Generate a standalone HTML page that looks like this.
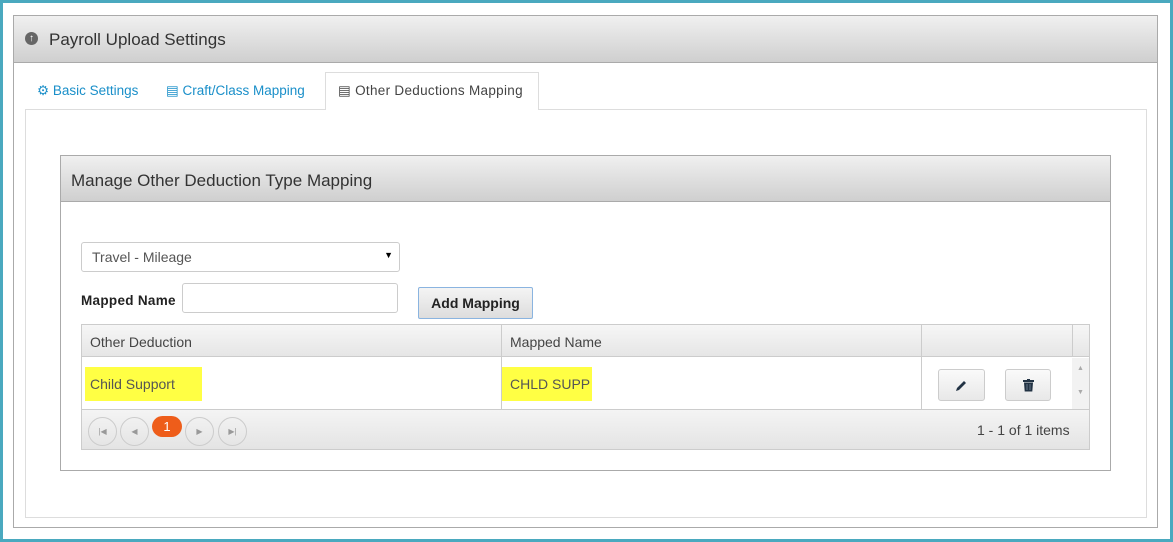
<!DOCTYPE html>
<html><head><style>
*{box-sizing:border-box;margin:0;padding:0}
body{width:1173px;height:542px;background:#fff;border:3px solid #4aa9bf;position:relative;font-family:"Liberation Sans",sans-serif;overflow:hidden}
.a{position:absolute}
</style></head><body>
<div class="a" style="left:10px;top:12px;width:1145px;height:513px;border:1px solid #aaa;background:#fff"></div>
<div class="a" style="left:10px;top:12px;width:1145px;height:48px;border:1px solid #aaa;background:linear-gradient(#f0f0f0,#cfcfcf)"></div>
<div class="a" style="left:22px;top:29px;width:13px;height:13px;border-radius:50%;background:#666;color:#fff;font-size:10px;text-align:center;line-height:13px">&#8593;</div>
<div class="a" style="left:46px;top:27px;font-size:17px;color:#333">Payroll Upload Settings</div>
<div class="a" style="left:22px;top:106px;width:1122px;height:409px;border:1px solid #ddd"></div>
<div class="a" style="left:322px;top:69px;width:214px;height:38px;border:1px solid #ddd;border-bottom:none;background:#fff"></div>
<div class="a" style="left:34px;top:80px;font-size:13.5px;color:#1a8fc9">&#9881; Basic Settings</div>
<div class="a" style="left:163px;top:80px;font-size:13.5px;color:#1a8fc9">&#9636; Craft/Class Mapping</div>
<div class="a" style="left:335px;top:80px;font-size:13.5px;color:#444;letter-spacing:0.3px">&#9636; Other Deductions Mapping</div>
<div class="a" style="left:57px;top:152px;width:1051px;height:316px;border:1px solid #aaa"></div>
<div class="a" style="left:57px;top:152px;width:1051px;height:47px;border:1px solid #aaa;background:linear-gradient(#f0f0f0,#cfcfcf)"></div>
<div class="a" style="left:68px;top:168px;font-size:17px;color:#333">Manage Other Deduction Type Mapping</div>
<div class="a" style="left:78px;top:239px;width:319px;height:30px;border:1px solid #ccc;border-radius:3px;font-size:14px;color:#555;padding:6px 10px">Travel - Mileage<span style="position:absolute;right:6px;top:7px;font-size:9px;color:#000">&#9660;</span></div>
<div class="a" style="left:78px;top:290px;font-size:13.5px;font-weight:bold;color:#222;letter-spacing:0.3px">Mapped Name</div>
<div class="a" style="left:179px;top:280px;width:216px;height:30px;border:1px solid #ccc;border-radius:3px"></div>
<div class="a" style="left:415px;top:284px;width:115px;height:32px;border:1px solid #8ab4e0;border-radius:2px;background:linear-gradient(#f4f4f4,#ddd);font-size:14px;font-weight:bold;color:#222;text-align:center;line-height:30px">Add Mapping</div>
<div class="a" style="left:78px;top:321px;width:1009px;height:126px;border:1px solid #ccc"></div>
<div class="a" style="left:79px;top:322px;width:1007px;height:32px;background:linear-gradient(#f6f6f6,#e6e6e6);border-bottom:1px solid #ccc"></div>
<div class="a" style="left:498px;top:322px;width:1px;height:84px;background:#ccc"></div>
<div class="a" style="left:918px;top:322px;width:1px;height:84px;background:#ccc"></div>
<div class="a" style="left:1069px;top:322px;width:1px;height:32px;background:#ccc"></div>
<div class="a" style="left:87px;top:331px;font-size:14px;color:#444">Other Deduction</div>
<div class="a" style="left:507px;top:331px;font-size:14px;color:#444">Mapped Name</div>
<div class="a" style="left:82px;top:364px;width:117px;height:34px;background:#ffff44"></div>
<div class="a" style="left:87px;top:373px;font-size:14px;color:#555">Child Support</div>
<div class="a" style="left:499px;top:364px;width:90px;height:34px;background:#ffff44"></div>
<div class="a" style="left:507px;top:373px;font-size:14px;color:#555">CHLD SUPP</div>
<div class="a" style="left:1069px;top:355px;width:17px;height:51px;background:#f2f2f2;color:#aaa;font-size:7px;text-align:center;line-height:12px;padding-top:5px">&#9650;<br><br>&#9660;</div>
<div class="a" style="left:935px;top:366px;width:47px;height:32px;border:1px solid #ccc;border-radius:3px;background:linear-gradient(#fafafa,#e8e8e8)"><svg class="a" style="left:16px;top:9px" width="13" height="13" viewBox="0 0 13 13"><path d="M1 12 L2 9 L9 2 L11 4 L4 11 Z" fill="#234"/></svg></div>
<div class="a" style="left:1002px;top:366px;width:46px;height:32px;border:1px solid #ccc;border-radius:3px;background:linear-gradient(#fafafa,#e8e8e8)"><svg class="a" style="left:17px;top:9px" width="11" height="13" viewBox="0 0 11 13"><rect x="0" y="1" width="11" height="2" fill="#234"/><rect x="4" y="0" width="3" height="2" fill="#234"/><path d="M1 3.5 H10 L9.3 12.5 H1.7 Z" fill="#234"/><path d="M4 5v6M7 5v6" stroke="#789" stroke-width="0.8"/></svg></div>
<div class="a" style="left:79px;top:406px;width:1007px;height:40px;background:linear-gradient(#f4f4f4,#e4e4e4);border-top:1px solid #ccc"></div>
<div class="a" style="left:85px;top:414px;width:29px;height:29px;border:1px solid #ccc;border-radius:50%;font-size:8px;color:#999;text-align:center;line-height:27px">|&#9664;</div>
<div class="a" style="left:117px;top:414px;width:29px;height:29px;border:1px solid #ccc;border-radius:50%;font-size:8px;color:#999;text-align:center;line-height:27px">&#9664;</div>
<div class="a" style="left:149px;top:413px;width:30px;height:21px;border-radius:11px;background:#ee5d1a;color:#fff;font-size:13px;text-align:center;line-height:21px">1</div>
<div class="a" style="left:182px;top:414px;width:29px;height:29px;border:1px solid #ccc;border-radius:50%;font-size:8px;color:#999;text-align:center;line-height:27px">&#9654;</div>
<div class="a" style="left:215px;top:414px;width:29px;height:29px;border:1px solid #ccc;border-radius:50%;font-size:8px;color:#999;text-align:center;line-height:27px">&#9654;|</div>
<div class="a" style="left:974px;top:419px;font-size:14px;color:#444">1 - 1 of 1 items</div>
</body></html>
